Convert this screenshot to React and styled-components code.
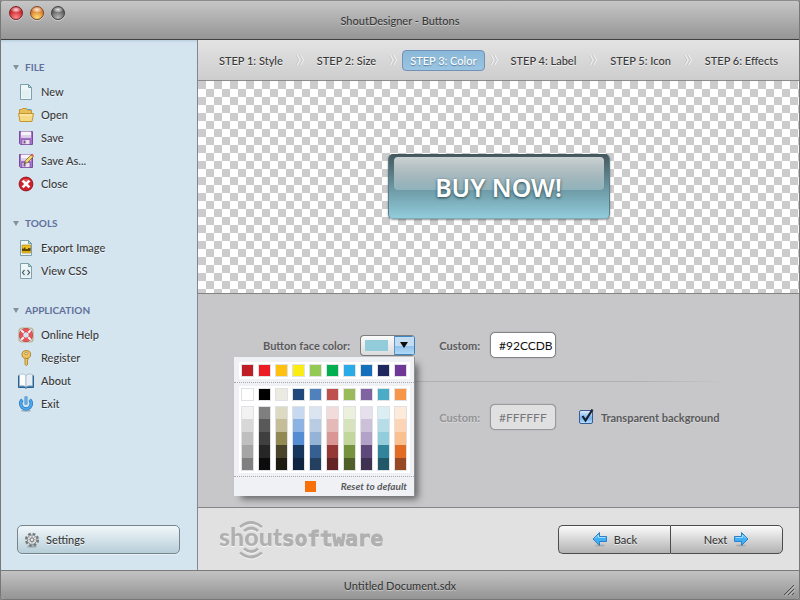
import React from "react";
import styled, { createGlobalStyle, css } from "styled-components";

const Global = createGlobalStyle`
  * { box-sizing: border-box; }
  body { margin: 0; background: #8a8a8a; }
  body, button, input { font-family: Lato, "Noto Sans", sans-serif; font-size: 11px; font-weight: 500; color: #383838; }
  button { cursor: pointer; }
`;

const Window = styled.div`
  min-height: 100vh;
  display: flex;
  flex-direction: column;
  border: 1px solid #777;
  border-top-color: #8c8c8c;
  border-radius: 4px;
  overflow: hidden;
  background: #e1e1e1;
`;

const TitleBar = styled.header`
  height: 39px;
  display: grid;
  grid-template-columns: 1fr auto 1fr;
  align-items: center;
  background: linear-gradient(#c6c6c6, #959595);
  border-bottom: 1px solid #3f3f3f;
  text-shadow: 0 1px 0 #cfcfcf;
`;

const Title = styled.h1`
  margin: 0;
  font-size: 11px;
  font-weight: 500;
`;

const Lights = styled.div`
  display: flex;
  gap: 7px;
  padding: 0 0 14px 8px;
`;

const Light = styled.button`
  width: 14px;
  height: 14px;
  padding: 0;
  border: 1px solid ${(p) => p.$edge};
  border-radius: 50%;
  background:
    radial-gradient(ellipse 5px 3px at 50% 22%, #ffffffdd, #ffffff33 90%, transparent),
    radial-gradient(circle at 50% 90%, ${(p) => p.$glow}, ${(p) => p.$color} 65%);
  box-shadow: 0 1px 0 #d0d0d0;
`;

const Body = styled.div`
  flex: 1;
  display: grid;
  grid-template-columns: 197px 1fr;
`;

const Sidebar = styled.aside`
  display: flex;
  flex-direction: column;
  justify-content: space-between;
  padding: 17px 17px 16px 16px;
  background: #d5e5f0;
  border-right: 1px solid #7f8a8e;
  box-shadow: inset 0 3px 3px -2px #b4c8d6;
`;

const Groups = styled.nav`
  display: flex;
  flex-direction: column;
  gap: 18px;
`;

const GroupTitle = styled.h2`
  display: flex;
  align-items: center;
  gap: 6px;
  height: 20px;
  margin: 0 0 3px -4px;
  font-size: 10px;
  font-weight: 700;
  color: #61709a;
`;

const List = styled.ul`
  list-style: none;
  margin: 0;
  padding: 0;
`;

const MenuLink = styled.a`
  display: flex;
  align-items: center;
  gap: 7px;
  height: 23px;
  padding-left: 1px;
  color: #383838;
  text-decoration: none;
  text-shadow: 0 1px 0 #eef6fb;
  white-space: nowrap;
`;

const glossy = css`
  display: flex;
  align-items: center;
  height: 29px;
  border: 1px solid #4c4c4c;
  text-shadow: 0 1px 0 #ffffffaa;
`;

const SettingsButton = styled.button`
  ${glossy}
  gap: 6px;
  padding: 0 6px;
  border-color: #76858c;
  border-radius: 5px;
  background: linear-gradient(#f1f7fa, #b7ced9);
  box-shadow: 0 1px 0 #e6f1f7;
`;

const Main = styled.main`
  display: flex;
  flex-direction: column;
  min-width: 0;
`;

const Steps = styled.nav`
  height: 41px;
  display: flex;
  align-items: center;
  justify-content: space-between;
  padding: 0 13px;
  background: linear-gradient(#e3e3e3, #cdcdcd);
  border-bottom: 1px solid #8b8b8b;
`;

const Step = styled.button`
  height: 21px;
  padding: 0 7px;
  white-space: nowrap;
  border: 1px solid ${(p) => (p.$active ? "#7391b5" : "transparent")};
  border-radius: 4px;
  background: ${(p) => (p.$active ? "linear-gradient(#8ab8d8, #9ac5e2)" : "none")};
  color: ${(p) => (p.$active ? "#fff" : "#383838")};
  text-shadow: ${(p) => (p.$active ? "0 1px 1px #5d7e9c" : "0 1px 0 #f4f4f4")};
`;

const Preview = styled.section`
  min-height: 213px;
  display: flex;
  align-items: center;
  justify-content: center;
  padding-bottom: 1px;
  background: repeating-conic-gradient(#fff 0 25%, #ccc 0 50%) 0 0 / 16px 16px;
  border-bottom: 1px solid #838383;
`;

const BuyButton = styled.button`
  position: relative;
  width: 222px;
  height: 65px;
  padding: 0;
  border: 1px solid #4b6a72;
  border-color: #43565a #5b7d86 #7fa9b4;
  border-radius: 5px;
  background: linear-gradient(#46595e, #6b97a2 52%, #92ccdb);
  box-shadow: 0 1px 2px #0006;
  color: #fff;
  font-family: "Noto Sans", sans-serif;
  font-size: 25px;
  font-weight: 600;
  text-shadow: 0 1px 3px #234049;

  &::before {
    content: "";
    position: absolute;
    inset: 2px 5px 28px;
    border-radius: 4px;
    background: linear-gradient(#ffffffb8, #ffffff3d);
  }
`;

const BuyLabel = styled.span`
  position: relative;
`;

const Form = styled.section`
  flex: 1;
  padding: 38px 69px 38px 0;
  background: #c7c7c9;
  border-bottom: 1px solid #858585;
  text-shadow: 0 1px 0 #d8d8d9;
`;

const FormRow = styled.div`
  display: grid;
  grid-template-columns: 152px 55px 55px 66px auto;
  column-gap: 10px;
  align-items: center;
  height: 26px;
  justify-content: start;
`;

const FieldLabel = styled.label`
  grid-column: ${(p) => p.$col};
  justify-self: end;
  font-weight: 700;
  white-space: nowrap;
  color: ${(p) => (p.$off ? "#939395" : "#5a5a5c")};
`;

const Rule = styled.hr`
  height: 1px;
  margin: 23px 0 22px 66px;
  border: 0;
  background: linear-gradient(90deg, #b0b0b2 80%, #c7c7c9);
`;

const HexInput = styled.input`
  width: 66px;
  height: 26px;
  padding: 0 0 0 8px;
  border: 1px solid #838385;
  border-radius: 5px;
  background: #fff;
  color: #111;
  font-size: 12px;
  font-weight: 400;
  box-shadow: 0 0 1px #77777a;

  &:disabled {
    border-color: #9a9a9c;
    background: #e0e0e1;
    color: #77777a;
  }
`;

const PickerWrap = styled.div`
  position: relative;
  grid-column: 2;
`;

const PickerButton = styled.button`
  display: flex;
  width: 55px;
  height: 21px;
  padding: 0;
  border: 1px solid #7d7d7f;
  border-right-color: #397fb8;
  border-radius: 4px;
  overflow: hidden;
  background: linear-gradient(#fafafa, #dcdcdc);
`;

const PickerSwatch = styled.span`
  flex: 1;
  height: 11px;
  margin: 4px 6px 4px 4px;
  background: ${(p) => p.$color};
`;

const PickerArrow = styled.span`
  width: 20px;
  height: 19px;
  display: flex;
  align-items: center;
  justify-content: center;
  background: linear-gradient(#c4dcf2 50%, #8fc0ea 50%, #b5dcf8);
  box-shadow: inset 1px 0 #5c93c2, inset 0 1px #3f87c2, inset 0 -1px #3f87c2;
`;

const Popup = styled.div`
  position: absolute;
  z-index: 1;
  top: 22px;
  right: 0;
  width: 181px;
  background: #eff1f5;
  border-right: 1px solid #8f8f91;
  box-shadow: 5px 5px 7px -2px #00000080;
  text-shadow: none;
`;

const Section = styled.div`
  padding: ${(p) => p.$pad};
  border-bottom: 1px dotted #a9a9ad;
`;

const Board = styled.div`
  display: grid;
  grid-template-columns: repeat(10, 13px);
  column-gap: 4px;
  row-gap: 5px;
  padding: 2px;
  background: #fff;
`;

const Swatch = styled.button`
  width: 13px;
  height: 13px;
  padding: 0;
  border: 1px solid #e0e1e5;
  background: ${(p) => p.$color};
`;

const Ramp = styled.div`
  display: flex;
  flex-direction: column;
`;

const Shade = styled(Swatch)`
  border-width: 0 1px;
  &:first-child { border-top-width: 1px; }
  &:last-child { border-bottom-width: 1px; }
`;

const PopupFoot = styled.div`
  display: flex;
  align-items: center;
  justify-content: flex-end;
  gap: 25px;
  height: 19px;
  padding-right: 7px;
`;

const DefaultChip = styled.span`
  width: 11px;
  height: 11px;
  background: #f96f0a;
`;

const ResetButton = styled.button`
  padding: 0;
  border: 0;
  background: none;
  font-size: 10px;
  font-weight: 700;
  font-style: italic;
  color: #5a5a5c;
  white-space: nowrap;
`;

const CheckLabel = styled.label`
  display: flex;
  align-items: center;
  gap: 8px;
  margin-left: 13px;
  font-weight: 700;
  color: #5a5a5c;
  white-space: nowrap;
`;

const CheckWrap = styled.span`
  position: relative;
  display: flex;
  svg { position: absolute; left: 0; bottom: 0; pointer-events: none; }
`;

const CheckBox = styled.input`
  appearance: none;
  width: 14px;
  height: 14px;
  margin: 0;
  border: 1px solid #3a5c93;
  border-radius: 2px;
  background: linear-gradient(#dbe9fa, #74b1f0 60%, #b4e0ff);
`;

const Footer = styled.footer`
  height: 62px;
  display: flex;
  align-items: center;
  justify-content: space-between;
  padding: 0 16px 0 20px;
  background: #e1e1e1;
`;

const Pager = styled.div`
  display: flex;
`;

const PageButton = styled.button`
  ${glossy}
  justify-content: center;
  gap: 6px;
  width: ${(p) => (p.$first ? 112 : 113)}px;
  padding: 0;
  background: linear-gradient(#fbfbfb, #b2b2b2);
  border-radius: ${(p) => (p.$first ? "5px 0 0 5px" : "0 5px 5px 0")};
  ${(p) => p.$first && "border-right: 0;"}
`;

const StatusBar = styled.div`
  height: 29px;
  display: grid;
  grid-template-columns: 1fr auto 1fr;
  align-items: center;
  border-top: 1px solid #7a7a7a;
  background: linear-gradient(#c3c3c3, #949494);
  text-shadow: 0 1px 0 #c9c9c9;
`;

const Status = styled.span`
  grid-column: 2;
`;

const Grip = styled.svg`
  align-self: end;
  justify-self: end;
  margin: 0 4px 3px 0;
`;

const Icon16 = ({ children }) => (
  <svg width="16" height="16" viewBox="0 0 16 16" aria-hidden="true">{children}</svg>
);

const Sheet = () => (
  <>
    <path d="M2.500 .5h8l3 3v12h-11z" fill="#eef6f8" stroke="#7da0ac" />
    <path d="M4 6h8v8H4z" fill="#d5e9ec" opacity=".5" />
    <path d="M10.500 .5v3h3z" fill="#b9dde0" stroke="#6f9f9f" />
  </>
);

const Floppy = () => (
  <>
    <path d="M1.500 1.500h13v13h-12l-1-1z" fill="#a974cf" stroke="#7b4b9e" />
    <path d="M3 1.500h10v6H3z" fill="#f7f3fa" />
    <path d="M3 5h10v2.500H3z" fill="#ddd3e6" />
    <path d="M4 9.500h8v5H4z" fill="#e9e2ee" stroke="#7b4b9e" strokeWidth=".7" />
    <path d="M5.500 10.500h2v3h-2z" fill="#7a5596" />
  </>
);

const icons = {
  new: <Sheet />,
  open: (
    <>
      <path d="M1.500 13.500v-11h2l1-1h4l1 1.500h4v3" fill="#e9bf5c" stroke="#c49632" />
      <path d="M9 2.500h4" stroke="#4ea6d8" />
      <path d="M.5 6.500h15l-1.500 8h-12z" fill="#f6d983" stroke="#c49632" />
      <path d="M2 8h12" stroke="#fff0bd" />
    </>
  ),
  save: <Floppy />,
  saveAs: (
    <>
      <Floppy />
      <path d="M6.500 10.500l1-3 6-6 2 2-6 6z" fill="#f5d76b" stroke="#7a6a2b" strokeWidth=".8" />
      <path d="M12.800 2.200l1.500-1.500 1.500 1.500-1.500 1.500z" fill="#e2555a" />
      <path d="M6.300 10.700l.5-1.500 1 1z" fill="#222" />
    </>
  ),
  close: (
    <>
      <circle cx="8" cy="8" r="6.900" fill="#d31f2b" stroke="#961c22" />
      <path d="M3 6a5.500 5 0 0 1 10 0z" fill="#ee6a6e" opacity=".6" />
      <path d="M4.600 4.600l6.800 6.800M11.400 4.600l-6.800 6.800" stroke="#fff" strokeWidth="2.700" />
    </>
  ),
  export: (
    <>
      <Sheet />
      <path d="M4 5h8.500v8H4z" fill="#f0c020" stroke="#a98211" strokeWidth=".6" />
      <path d="M4 8.500h2V7.500h1.500v1.500h2.500v-1h2.500v3H4z" fill="#5f4806" />
      <path d="M4 11h8.500v2H4z" fill="#dfaf1b" />
    </>
  ),
  css: (
    <>
      <Sheet />
      <path d="M6.500 7L4.500 9.500l2 2.500M9.500 7l2 2.500-2 2.500" fill="none" stroke="#475259" strokeWidth="1.200" />
    </>
  ),
  help: (
    <>
      <rect x="1" y="1" width="14" height="14" rx="3" fill="none" stroke="#b7ad85" strokeWidth="1.200" />
      <circle cx="8" cy="8" r="4.900" fill="none" stroke="#b93a3d" strokeWidth="4.200" />
      <circle cx="8" cy="8" r="4.900" fill="none" stroke="#e9545a" strokeWidth="3.200" />
      <path d="M3.300 3.300l2.500 2.500M12.700 3.300l-2.500 2.500M3.300 12.700l2.500-2.500M12.700 12.700l-2.500-2.500" stroke="#f8f4f0" strokeWidth="2" />
    </>
  ),
  register: (
    <>
      <path d="M7 8h3v2l-1 1 1 1-1 1 1 1-1.500 1.500L7 14.500z" fill="#efc457" stroke="#a97c25" strokeWidth=".8" />
      <ellipse cx="8.300" cy="4.500" rx="4.300" ry="3.900" fill="#f1c55c" stroke="#a97c25" strokeWidth=".9" />
      <ellipse cx="8.300" cy="3.600" rx="1.700" ry="1.100" fill="#d5e5f0" stroke="#a97c25" strokeWidth=".7" />
    </>
  ),
  about: (
    <>
      <path d="M.5 2.500v12h6.500l1 1 1-1h6.500v-12" fill="#3f80b5" stroke="#2c618e" />
      <path d="M1.500 1.500c3-.8 5-.5 6.500 1v11.500c-1.500-1.300-3.500-1.500-6.500-1z" fill="#fafcfe" stroke="#8ba6ba" strokeWidth=".6" />
      <path d="M14.500 1.500c-3-.8-5-.5-6.500 1v11.500c1.500-1.300 3.500-1.500 6.500-1z" fill="#e5eef5" stroke="#8ba6ba" strokeWidth=".6" />
    </>
  ),
  exit: (
    <>
      <ellipse cx="8" cy="14.700" rx="5" ry="1" fill="#9fb4c4" />
      <path d="M4.300 3.800a5.300 5.300 0 1 0 7.400 0" fill="none" stroke="#1e6fb8" strokeWidth="3.400" />
      <path d="M4.300 3.800a5.300 5.300 0 1 0 7.400 0" fill="none" stroke="#4aa6ec" strokeWidth="2.200" />
      <path d="M8 .5v8" stroke="#1e6fb8" strokeWidth="2.800" />
      <path d="M8 1v7" stroke="#6dbdf4" strokeWidth="1.600" />
    </>
  ),
  gear: (
    <>
      <ellipse cx="8" cy="14.500" rx="5" ry="1.200" fill="#9fb0b8" />
      <circle cx="8" cy="7.700" r="5.800" fill="none" stroke="#777b7e" strokeWidth="2.600" strokeDasharray="2.700 1.850" />
      <circle cx="8" cy="7.700" r="4.700" fill="#e8eaeb" stroke="#85898c" strokeWidth="1" />
      <path d="M8 4v7.400M4.300 7.700h7.400M5.400 5.100l5.200 5.200M10.600 5.100l-5.200 5.200" stroke="#8d9194" strokeWidth=".9" />
      <circle cx="8" cy="7.700" r="1.800" fill="#eef0f1" stroke="#7b7f82" />
    </>
  ),
};

const Arrow = ({ right }) => (
  <Icon16>
    <ellipse cx="8" cy="14.500" rx="5" ry="1" fill="#8f8f8f" opacity=".5" />
    <path
      d={right ? "M15 8L8.500 1.500v4H1.500v5h7v4z" : "M1 8L7.500 1.500v4h7v5h-7v4z"}
      fill="#3fb0f5"
      stroke="#2f7fc4"
    />
    <path d={right ? "M2.500 6.500h7V4l3.500 3.500" : "M13.500 6.500h-7V4L3 7.500"} fill="none" stroke="#a5dffd" />
  </Icon16>
);

const Chevrons = () => (
  <svg width="8" height="12" viewBox="0 0 8 12" fill="none" aria-hidden="true">
    <path d="M1 1l3 5-3 5M4.500 1l3 5-3 5" stroke="#f2f2f2" strokeWidth="1.200" />
    <path d="M0 1l3 5-3 5M3.500 1l3 5-3 5" stroke="#bdbdbd" strokeWidth=".7" />
  </svg>
);

const LogoText = styled.text`
  font-family: ${(p) => (p.$mono ? '"DejaVu Sans Mono", monospace' : 'Lato, sans-serif')};
  font-size: ${(p) => (p.$mono ? 21 : 25)}px;
  font-weight: ${(p) => (p.$mono ? 700 : 900)};
  fill: #b0b0b0;
  stroke: #b0b0b0;
  stroke-width: ${(p) => (p.$mono ? 1 : 0)}px;
`;

const LogoSvg = styled.svg`
  filter: drop-shadow(0 1px 0 #f3f3f3);
`;

const Logo = () => (
  <LogoSvg width="168" height="42" viewBox="0 0 168 42" role="img" aria-label="shoutsoftware">
    <LogoText x="1" y="28">shout</LogoText>
    <LogoText x="64" y="28" $mono>software</LogoText>
    <g fill="none" stroke="#b0b0b0" strokeWidth="2.800">
      <path d="M22 9q11-9 22 0" />
      <path d="M26 13q7.500-6 14 0" />
      <path d="M26 30.500q7.500 6 14 0" />
      <path d="M22 34.500q11 9 22 0" />
    </g>
  </LogoSvg>
);

const groups = [
  ["FILE", [["New", "new"], ["Open", "open"], ["Save", "save"], ["Save As...", "saveAs"], ["Close", "close"]]],
  ["TOOLS", [["Export Image", "export"], ["View CSS", "css"]]],
  ["APPLICATION", [["Online Help", "help"], ["Register", "register"], ["About", "about"], ["Exit", "exit"]]],
];

const steps = ["STEP 1: Style", "STEP 2: Size", "STEP 3: Color", "STEP 4: Label", "STEP 5: Icon", "STEP 6: Effects"];

const standard = ["#be1e26", "#ed1c24", "#ffc010", "#f9ed15", "#94ca54", "#00b050", "#29abe7", "#1570bc", "#1f275f", "#703896"];
const theme = ["#ffffff", "#000000", "#ebebe1", "#1f497d", "#4f81bd", "#c0504d", "#9bbb59", "#8064a2", "#4bacc6", "#f79646"];
const ramps = [
  ["#f2f2f2", "#d8d8d8", "#bfbfbf", "#a5a5a5", "#7f7f7f"],
  ["#7f7f7f", "#595959", "#3f3f3f", "#262626", "#0c0c0c"],
  ["#dddac4", "#c4bd97", "#938953", "#494429", "#1d1b10"],
  ["#c6d9f0", "#8db3e2", "#548dd4", "#17365d", "#0f243e"],
  ["#dbe5f1", "#b8cce4", "#95b3d7", "#366092", "#244061"],
  ["#f2dcdb", "#e5b9b7", "#d99694", "#953734", "#632423"],
  ["#ebf1dd", "#d7e3bc", "#c3d69b", "#76923c", "#4f6128"],
  ["#e5e0ec", "#ccc1d9", "#b2a2c7", "#5f497a", "#3f3151"],
  ["#dbeef3", "#b7dde8", "#92cddc", "#31859b", "#205867"],
  ["#fdeada", "#fbd5b5", "#fac08f", "#e36c24", "#974824"],
];

const Palette = () => (
  <Popup role="dialog" aria-label="Colors">
    <Section $pad="5px 4px 3px 5px">
      <Board>{standard.map((c) => <Swatch key={c} $color={c} aria-label={c} />)}</Board>
    </Section>
    <Section $pad="3px 4px 3px 5px">
      <Board>
        {theme.map((c) => <Swatch key={c} $color={c} aria-label={c} />)}
        {ramps.map((ramp, i) => (
          <Ramp key={i}>{ramp.map((c) => <Shade key={c} $color={c} aria-label={c} />)}</Ramp>
        ))}
      </Board>
    </Section>
    <PopupFoot>
      <DefaultChip />
      <ResetButton>Reset to default</ResetButton>
    </PopupFoot>
  </Popup>
);

const Picker = ({ color, open, ...rest }) => (
  <PickerWrap>
    <PickerButton aria-haspopup="dialog" aria-expanded={!!open} {...rest}>
      <PickerSwatch $color={color} />
      <PickerArrow>
        <svg width="8" height="6" aria-hidden="true"><path d="M0 0h8L4 6z" fill="#0c0c0c" /></svg>
      </PickerArrow>
    </PickerButton>
    {open && <Palette />}
  </PickerWrap>
);

export default function App() {
  return (
    <Window>
      <Global />
      <TitleBar>
        <Lights>
          <Light aria-label="Close window" $color="#c8232b" $glow="#ff8d8d" $edge="#7b2124" />
          <Light aria-label="Minimize window" $color="#d9792b" $glow="#ffe27a" $edge="#80461f" />
          <Light aria-label="Zoom window" $color="#5c5c5c" $glow="#b9b9b9" $edge="#3f3f3f" />
        </Lights>
        <Title>ShoutDesigner - Buttons</Title>
      </TitleBar>
      <Body>
        <Sidebar>
          <Groups>
            {groups.map(([name, items]) => (
              <div key={name}>
                <GroupTitle>
                  <svg width="6" height="6" aria-hidden="true"><path d="M0 1h6L3 6z" fill="#82929c" /></svg>
                  {name}
                </GroupTitle>
                <List>
                  {items.map(([label, icon]) => (
                    <li key={label}>
                      <MenuLink href="#"><Icon16>{icons[icon]}</Icon16>{label}</MenuLink>
                    </li>
                  ))}
                </List>
              </div>
            ))}
          </Groups>
          <SettingsButton><Icon16>{icons.gear}</Icon16>Settings</SettingsButton>
        </Sidebar>
        <Main>
          <Steps>
            {steps.map((s, i) => (
              <React.Fragment key={s}>
                {i > 0 && <Chevrons />}
                <Step $active={i === 2}>{s}</Step>
              </React.Fragment>
            ))}
          </Steps>
          <Preview>
            <BuyButton><BuyLabel>BUY NOW!</BuyLabel></BuyButton>
          </Preview>
          <Form>
            <FormRow>
              <FieldLabel $col={1} htmlFor="face">Button face color:</FieldLabel>
              <Picker id="face" color="#92ccdb" open />
              <FieldLabel $col={3} htmlFor="face-hex">Custom:</FieldLabel>
              <HexInput id="face-hex" defaultValue="#92CCDB" />
            </FormRow>
            <Rule />
            <FormRow>
              <Picker color="#ffffff" aria-label="Background color" />
              <FieldLabel $col={3} $off htmlFor="back-hex">Custom:</FieldLabel>
              <HexInput id="back-hex" defaultValue="#FFFFFF" disabled />
              <CheckLabel>
                <CheckWrap>
                  <CheckBox type="checkbox" defaultChecked />
                  <svg width="16" height="16" viewBox="0 0 16 16" aria-hidden="true">
                    <path d="M3.500 8l3 4.500L13.500 1.500" fill="none" stroke="#17202c" strokeWidth="2.200" />
                  </svg>
                </CheckWrap>
                Transparent background
              </CheckLabel>
            </FormRow>
          </Form>
          <Footer>
            <Logo />
            <Pager>
              <PageButton $first><Arrow />Back</PageButton>
              <PageButton>Next<Arrow right /></PageButton>
            </Pager>
          </Footer>
        </Main>
      </Body>
      <StatusBar>
        <Status>Untitled Document.sdx</Status>
        <Grip width="12" height="12" aria-hidden="true">
          <path d="M1 11L11 1M5 11l6-6M9 11l2-2" stroke="#4a4a4a" />
          <path d="M2 12L12 2M6 12l6-6" stroke="#c4c4c4" strokeWidth=".7" />
        </Grip>
      </StatusBar>
    </Window>
  );
}
